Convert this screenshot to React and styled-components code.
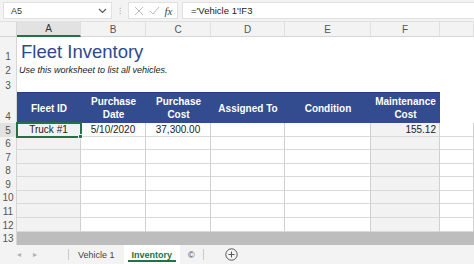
import React from 'react';
import styled, { createGlobalStyle } from 'styled-components';

const GlobalStyle = createGlobalStyle`
  html, body { margin: 0; padding: 0; background: #fff; }
  body { font-family: "Liberation Sans", Arial, sans-serif; }
  * { box-sizing: border-box; }
`;

const Page = styled.div`
  width: 474px;
  height: 264px;
  overflow: hidden;
  display: flex;
  flex-direction: column;
  background: #fff;
`;

const FormulaBar = styled.div`
  height: 22px;
  flex-shrink: 0;
  display: flex;
  align-items: center;
  gap: 4px;
  padding: 2px 0 2px 3px;
  background: #f3f3f3;
  border-bottom: 1px solid #e1e1e1;
`;

const NameBox = styled.div`
  width: 109px;
  height: 17px;
  display: flex;
  align-items: center;
  justify-content: space-between;
  padding: 0 4px 0 7px;
  background: #fff;
  border: 1px solid #e0e0e0;
  font-size: 9px;
  color: #333;
`;

const Dots = styled.div`
  width: 8px;
  display: flex;
  justify-content: center;
  color: #aaa;
  font-size: 9px;
`;

const IconBox = styled.div`
  width: 50px;
  height: 17px;
  display: flex;
  align-items: center;
  justify-content: space-around;
  padding: 0 2px;
  background: #fff;
  border: 1px solid #e0e0e0;
`;

const Fx = styled.span`
  font-family: "Liberation Serif", serif;
  font-style: italic;
  font-size: 11px;
  color: #444;
`;

const FormulaInput = styled.div`
  flex: 1;
  height: 17px;
  display: flex;
  align-items: center;
  padding-left: 8px;
  background: #fff;
  border: 1px solid #e0e0e0;
  border-right: none;
  font-size: 9.5px;
  color: #222;
`;

const Sheet = styled.div`
  flex-shrink: 0;
  display: grid;
  grid-template-columns: 17px 64px 65px 65px 74px 86px 69px 34px;
  grid-template-rows: 15px 26px 14px 15px 31px 14px 13px 14px 13px 14px 13px 14px 14px 13px;
`;

const ColHead = styled.div`
  border-bottom: ${p => (p.$active ? '2px solid #217346' : '1px solid #d6d6d6')};
  border-right: 1px solid #e0e0e0;
  background: ${p => (p.$active ? '#e2e2e2' : '#f3f3f3')};
  color: ${p => (p.$active ? '#333' : '#555')};
  font-size: 10px;
  display: flex;
  align-items: center;
  justify-content: center;
`;

const Corner = styled.div`
  background: #f3f3f3;
  border-right: 1px solid #d6d6d6;
  border-bottom: 1px solid #d6d6d6;
`;

const RowNum = styled.div`
  background: ${p => (p.$active ? '#e2e2e2' : '#f3f3f3')};
  border-right: 1px solid #d6d6d6;
  color: #555;
  font-size: 10px;
  display: flex;
  align-items: flex-end;
  justify-content: center;
  padding-bottom: 1px;
  line-height: 1;
`;

const Title = styled.div`
  grid-column: 2 / 9;
  display: flex;
  align-items: flex-end;
  padding: 0 0 1px 4px;
  font-size: 18.5px;
  line-height: 1.1;
  color: #2f4a8b;
  white-space: nowrap;
`;

const Subtitle = styled.div`
  grid-column: 2 / 9;
  display: flex;
  align-items: flex-end;
  padding: 0 0 1px 2px;
  font-size: 9px;
  line-height: 1.1;
  font-style: italic;
  color: #222;
  white-space: nowrap;
`;

const Blank = styled.div`
  grid-column: 2 / 9;
`;

const Head = styled.div`
  background: #334b8f;
  color: #fff;
  font-weight: bold;
  font-size: 10px;
  line-height: 13px;
  text-align: center;
  display: flex;
  align-items: center;
  justify-content: center;
  border-top: 1px solid #2a3f7a;
  white-space: nowrap;
`;

const Empty = styled.div``;

const Cell = styled.div`
  background: ${p => (p.$shade ? '#f2f2f2' : '#fff')};
  border-right: 1px solid #d0d0d0;
  border-bottom: 1px solid #d9d9d9;
  font-size: 10px;
  line-height: 1;
  color: #222;
  display: flex;
  align-items: flex-end;
  justify-content: ${p => (p.$align === 'right' ? 'flex-end' : 'center')};
  padding: 0 3px 1px;
  white-space: nowrap;
  position: relative;
  ${p => p.$selected && `
    outline: 2px solid #217346;
    outline-offset: -1px;
    z-index: 1;
  `}
`;

const Handle = styled.span`
  position: absolute;
  right: -3px;
  bottom: -3px;
  width: 5px;
  height: 5px;
  background: #217346;
  border: 1px solid #fff;
`;

const ScrollBand = styled.div`
  grid-column: 2 / 9;
  background: #bdbdbd;
`;

const TabBar = styled.div`
  flex: 1;
  display: flex;
  align-items: stretch;
  background: #f3f3f3;
  font-size: 9px;
  color: #444;
`;

const Arrows = styled.div`
  width: 68px;
  display: flex;
  align-items: center;
  gap: 12px;
  padding-left: 17px;
  color: #b0b0b0;
  font-size: 8px;
`;

const Divider = styled.div`
  width: 1px;
  margin: 4px 0;
  background: #c8c8c8;
`;

const Tab = styled.div`
  display: flex;
  align-items: center;
  padding: 0 ${p => p.$pad ?? 8}px;
  background: ${p => (p.$active ? '#fff' : 'transparent')};
  color: ${p => (p.$active ? '#217346' : '#444')};
  font-weight: ${p => (p.$active ? 'bold' : 'normal')};
  position: relative;
  ${p => p.$active && `
    &::after {
      content: '';
      position: absolute;
      left: 4px;
      right: 4px;
      bottom: 2px;
      height: 2px;
      background: #217346;
    }
  `}
`;

const AddButton = styled.div`
  display: flex;
  align-items: center;
  padding-left: 21px;
`;

const columns = ['A', 'B', 'C', 'D', 'E', 'F', ''];
const headers = ['Fleet ID', 'Purchase\nDate', 'Purchase\nCost', 'Assigned To', 'Condition', 'Maintenance\nCost'];

const dataRows = [
  ['Truck #1', '5/10/2020', '37,300.00', '', '', '155.12', ''],
  ...Array.from({ length: 7 }, () => ['', '', '', '', '', '', '']),
];

export default function App() {
  return (
    <Page>
      <GlobalStyle />
      <FormulaBar>
        <NameBox>
          A5
          <svg width="9" height="6" viewBox="0 0 9 6"><path d="M1 1l3.5 3.5L8 1" fill="none" stroke="#555" strokeWidth="1.1" /></svg>
        </NameBox>
        <Dots>⁝</Dots>
        <IconBox>
          <svg width="10" height="10" viewBox="0 0 10 10"><path d="M1 1l8 8M9 1l-8 8" stroke="#bbb" strokeWidth="1" /></svg>
          <svg width="11" height="9" viewBox="0 0 11 9"><path d="M1 5l3 3 6-7" fill="none" stroke="#bbb" strokeWidth="1" /></svg>
          <Fx>fx</Fx>
        </IconBox>
        <FormulaInput>='Vehicle 1'!F3</FormulaInput>
      </FormulaBar>

      <Sheet>
        <Corner />
        {columns.map((c, i) => (
          <ColHead key={i} $active={c === 'A'}>{c}</ColHead>
        ))}

        <RowNum>1</RowNum>
        <Title>Fleet Inventory</Title>
        <RowNum>2</RowNum>
        <Subtitle>Use this worksheet to list all vehicles.</Subtitle>
        <RowNum>3</RowNum>
        <Blank />

        <RowNum>4</RowNum>
        {headers.map(h => (
          <Head key={h}>
            <span>{h.split('\n').map((l, i) => <div key={i}>{l}</div>)}</span>
          </Head>
        ))}
        <Empty />

        {dataRows.map((row, r) => (
          <React.Fragment key={r}>
            <RowNum $active={r === 0}>{r + 5}</RowNum>
            {row.map((v, c) => (
              <Cell
                key={c}
                $shade={c === 0 || c === 5}
                $align={c === 5 ? 'right' : 'center'}
                $selected={r === 0 && c === 0}
              >
                {v}
                {r === 0 && c === 0 && <Handle />}
              </Cell>
            ))}
          </React.Fragment>
        ))}

        <RowNum>13</RowNum>
        <ScrollBand />
      </Sheet>

      <TabBar>
        <Arrows><span>◂</span><span>▸</span></Arrows>
        <Divider />
        <Tab $pad={9}>Vehicle 1</Tab>
        <Tab $active>Inventory</Tab>
        <Tab $pad={8}>©</Tab>
        <Divider />
        <AddButton>
          <svg width="13" height="13" viewBox="0 0 13 13"><circle cx="6.5" cy="6.5" r="5.7" fill="none" stroke="#555" strokeWidth="1" /><path d="M6.5 3.5v6M3.5 6.5h6" stroke="#555" strokeWidth="1" /></svg>
        </AddButton>
      </TabBar>
    </Page>
  );
}
